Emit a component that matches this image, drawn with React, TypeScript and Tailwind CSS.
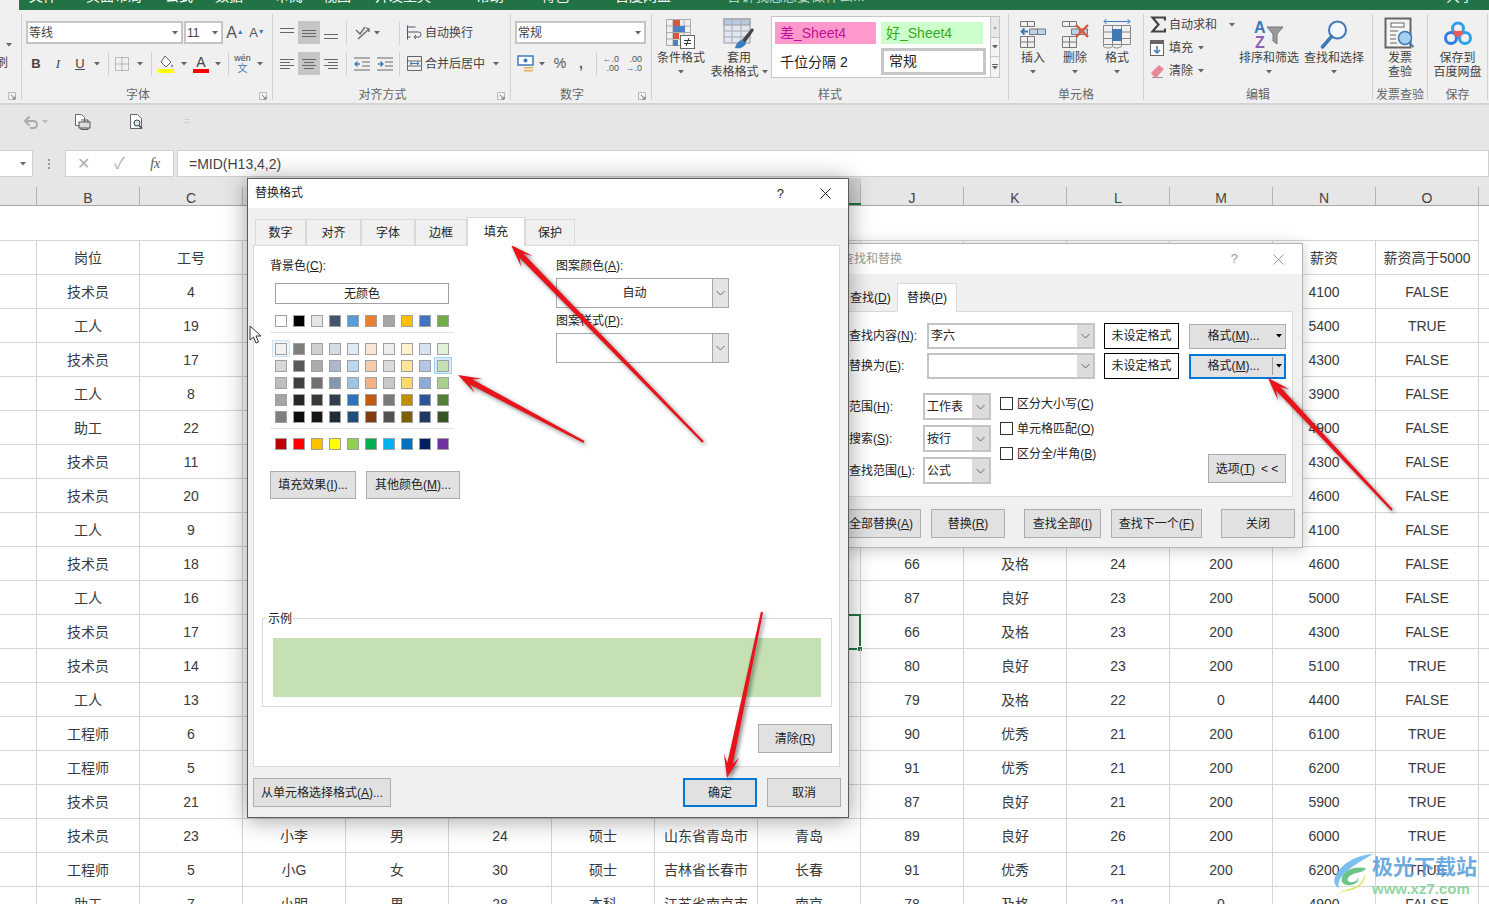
import type { ReactNode } from 'react';

const tabs = [
  ['文件', 'w-[57px]'],
  ['页面布局', 'w-[79px]'],
  ['公式', 'w-[50px]'],
  ['数据', 'w-[60px]'],
  ['审阅', 'w-[48px]'],
  ['视图', 'w-[52px]'],
  ['开发工具', 'w-[101px]'],
  ['帮助', 'w-[65px]'],
  ['特色', 'w-[74px]'],
  ['百度网盘', 'w-[84px]'],
];

const themeRow = ['#ffffff', '#000000', '#e7e6e6', '#44546a', '#5b9bd5', '#ed7d31', '#a5a5a5', '#ffc000', '#4472c4', '#70ad47'];
const shades = [
  ['#f2f2f2', '#7f7f7f', '#d0cece', '#d6dce4', '#deeaf6', '#fbe5d5', '#ededed', '#fff2cc', '#d9e2f3', '#e2efd9'],
  ['#d8d8d8', '#595959', '#aeabab', '#adb9ca', '#bdd7ee', '#f7cbac', '#dbdbdb', '#fee599', '#b4c6e7', '#c5e0b3'],
  ['#bfbfbf', '#3f3f3f', '#757070', '#8496b0', '#9dc3e6', '#f4b183', '#c9c9c9', '#ffd966', '#8eaadb', '#a8d08d'],
  ['#a5a5a5', '#262626', '#3a3838', '#323e4f', '#2e75b5', '#c55a11', '#7b7b7b', '#bf9000', '#2f5496', '#538135'],
  ['#7f7f7f', '#0c0c0c', '#171616', '#222a35', '#1e4e79', '#833c0b', '#525252', '#7f6000', '#1f3864', '#375623'],
];
const standard = ['#c00000', '#ff0000', '#ffc000', '#ffff00', '#92d050', '#00b050', '#00b0f0', '#0070c0', '#002060', '#7030a0'];

const columns = ['B', 'C', 'D', 'E', 'F', 'G', 'H', 'I', 'J', 'K', 'L', 'M', 'N', 'O'];

// B C D E F G H I J K L M N O
const rows: string[][] = [
  ['岗位', '工号', '', '', '', '', '', '', '', '', '', '', '薪资', '薪资高于5000'],
  ['技术员', '4', '', '', '', '', '', '', '', '', '', '', '4100', 'FALSE'],
  ['工人', '19', '', '', '', '', '', '', '', '', '', '', '5400', 'TRUE'],
  ['技术员', '17', '', '', '', '', '', '', '', '', '', '', '4300', 'FALSE'],
  ['工人', '8', '', '', '', '', '', '', '', '', '', '', '3900', 'FALSE'],
  ['助工', '22', '', '', '', '', '', '', '', '', '', '', '4900', 'FALSE'],
  ['技术员', '11', '', '', '', '', '', '', '', '', '', '', '4300', 'FALSE'],
  ['技术员', '20', '', '', '', '', '', '', '', '', '', '', '4600', 'FALSE'],
  ['工人', '9', '', '', '', '', '', '', '', '', '', '', '4100', 'FALSE'],
  ['技术员', '18', '', '', '', '', '', '', '66', '及格', '24', '200', '4600', 'FALSE'],
  ['工人', '16', '', '', '', '', '', '', '87', '良好', '23', '200', '5000', 'FALSE'],
  ['技术员', '17', '', '', '', '', '', '', '66', '及格', '23', '200', '4300', 'FALSE'],
  ['技术员', '14', '', '', '', '', '', '', '80', '良好', '23', '200', '5100', 'TRUE'],
  ['工人', '13', '', '', '', '', '', '', '79', '及格', '22', '0', '4400', 'FALSE'],
  ['工程师', '6', '', '', '', '', '', '', '90', '优秀', '21', '200', '6100', 'TRUE'],
  ['工程师', '5', '', '', '', '', '', '', '91', '优秀', '21', '200', '6200', 'TRUE'],
  ['技术员', '21', '', '', '', '', '', '', '87', '良好', '21', '200', '5900', 'TRUE'],
  ['技术员', '23', '小李', '男', '24', '硕士', '山东省青岛市', '青岛', '89', '良好', '26', '200', '6000', 'TRUE'],
  ['工程师', '5', '小G', '女', '30', '硕士', '吉林省长春市', '长春', '91', '优秀', '21', '200', '6200', 'TRUE'],
  ['助工', '7', '小明', '男', '28', '本科', '江苏省南京市', '南京', '78', '及格', '21', '0', '4900', 'FALSE'],
];

function Caret({ color = '#666' }: { color?: string }) {
  return (
    <svg width="6" height="4" viewBox="0 0 6 4" className="shrink-0">
      <path d="M0 0h6L3 3.5z" fill={color} />
    </svg>
  );
}

function Sep({ h = 'h-[24px]' }: { h?: string }) {
  return <div className={`w-px shrink-0 bg-[#d2d2d2] ${h}`} />;
}

function Bars({ bars, size = 14 }: { bars: number[][]; size?: number }) {
  return (
    <svg width={size} height={size} viewBox={`0 0 ${size} ${size}`} className="shrink-0">
      {bars.map(([x, y, w], i) => (
        <rect key={i} x={x} y={y} width={w} height="1" fill="#666" />
      ))}
    </svg>
  );
}

function AlignBtn({ bars, on }: { bars: number[][]; on?: boolean }) {
  return (
    <div className={`flex h-[23px] w-[22px] items-center justify-center ${on ? 'bg-[#c6c6c6]' : ''}`}>
      <Bars bars={bars} />
    </div>
  );
}

function Launcher() {
  return (
    <div className="flex w-[18px] items-center justify-center pt-[6px]">
      <svg width="8" height="8" viewBox="0 0 8 8">
        <path d="M0.5 0.5h7v7h-7z" fill="none" stroke="#bbb" />
        <path d="M3 3l4 4M7 4.5V7H4.5" fill="none" stroke="#777" />
      </svg>
    </div>
  );
}

function GroupLabel({ text, launcher }: { text: string; launcher?: boolean }) {
  return (
    <div className="mt-auto flex h-[15px] text-[12px] leading-[20px] text-[#666]">
      <div className="flex-1 text-center whitespace-nowrap">{text}</div>
      {launcher && <Launcher />}
    </div>
  );
}

function BigBtn({ icon, label, second, w, caret = true }: { icon: ReactNode; label: string; second?: string; w: string; caret?: boolean }) {
  return (
    <div className={`flex shrink-0 flex-col items-center text-[12px] leading-[14px] text-[#444] ${w}`}>
      <div className="flex h-[34px] items-center justify-center">{icon}</div>
      <div className="whitespace-nowrap">{label}</div>
      {second ? (
        <div className="flex items-center gap-[3px] whitespace-nowrap">
          {second}
          {caret && <Caret />}
        </div>
      ) : (
        caret && (
          <div className="flex h-[14px] items-center">
            <Caret />
          </div>
        )
      )}
    </div>
  );
}

function Select({ text, w }: { text: string; w: string }) {
  return (
    <div className={`flex h-[23px] shrink-0 items-center justify-between border-2 border-[#c6c6c6] bg-white pl-[1px] pr-[3px] text-[12px] text-[#444] ${w}`}>
      {text}
      <Caret />
    </div>
  );
}

function CondIcon() {
  return (
    <svg width="30" height="30" viewBox="0 0 30 30">
      <path d="M.5.5h24v26H.5zM.5 7h24M.5 13.5h24M.5 20h24M7 .5v26M18 .5v26" fill="none" stroke="#aaa" />
      <rect x="7" y="1" width="7" height="6" fill="#d9573a" />
      <rect x="7" y="7" width="12" height="6" fill="#4a83c0" />
      <rect x="7" y="14" width="6" height="6" fill="#d9573a" />
      <rect x="7" y="21" width="5" height="6" fill="#4a83c0" />
      <rect x="14.5" y="16.5" width="14" height="13" fill="#fff" stroke="#666" />
      <path d="M18 21.5h7M18 24.5h7M23 19l-3 8" stroke="#333" fill="none" />
    </svg>
  );
}

function TableIcon() {
  return (
    <svg width="32" height="32" viewBox="0 0 32 32">
      <rect x="1" y="1" width="26" height="24" fill="#dfe7f2" stroke="#999" />
      <rect x="1" y="1" width="26" height="6" fill="#b7c9e2" stroke="#999" />
      <path d="M1 13h26M1 19h26M9 1v24M18 1v24" stroke="#aaa" fill="none" />
      <path d="M29 10L19 22l3 3 9-13z" fill="#444" />
      <path d="M19 22c-4 1-6 4-7 8 5 1 10-1 11-5z" fill="#3b7dbd" />
    </svg>
  );
}

function CellsIcon({ remove }: { remove?: boolean }) {
  return (
    <svg width="28" height="30" viewBox="0 0 28 30">
      <path d="M1.5 2.500h14v5h-14zM8.500 2.500v5M1.500 17.500h14v11h-14zM1.500 23h14M8.500 17.500v11" fill="none" stroke="#777" />
      <path d="M10.500 10h16v5.500h-16zM18.500 10v5.500" fill="#bcd2e8" stroke="#777" />
      {remove ? (
        <path d="M15 6l12 12M27 6L15 18" stroke="#d9573a" strokeWidth="2.400" fill="none" />
      ) : (
        <path d="M9 12.500H3M5.500 9.500l-3 3 3 3" stroke="#3f79b5" strokeWidth="1.800" fill="none" />
      )}
    </svg>
  );
}

function FormatCellsIcon() {
  return (
    <svg width="30" height="32" viewBox="0 0 30 32">
      <path d="M2 3.500h26M4.500 1l-2.500 2.500 2.500 2.500M25.500 1l2.500 2.500-2.500 2.500" fill="none" stroke="#3f79b5" />
      <path d="M1.500 7.500h27v19h-27zM1.500 14h27M1.500 20.500h27M10.500 7.500v19M19.500 7.500v19" fill="none" stroke="#888" />
      <rect x="10" y="11" width="10" height="12" fill="#3f79b5" />
      <path d="M1.500 26.500v2c3 2 6 2 9 0v-2M10.500 28.500c3 2 6 2 9 0v-2" fill="none" stroke="#888" />
    </svg>
  );
}

function SortIcon() {
  return (
    <svg width="30" height="30" viewBox="0 0 30 30">
      <text x="0" y="14" fontSize="16" fontWeight="700" fill="#3f79b5">A</text>
      <text x="1" y="29" fontSize="16" fontWeight="700" fill="#8e5fb5">Z</text>
      <path d="M13 8h16l-6 7v10l-4-3v-7z" fill="#999" stroke="#777" />
    </svg>
  );
}

function SearchIcon() {
  return (
    <svg width="30" height="30" viewBox="0 0 30 30">
      <circle cx="18.500" cy="11" r="8.500" fill="#f4f8fc" stroke="#3f79b5" strokeWidth="2" />
      <path d="M12.500 17.500L3.500 28" stroke="#3f79b5" strokeWidth="3.500" strokeLinecap="round" />
    </svg>
  );
}

function InvoiceIcon() {
  return (
    <svg width="32" height="34" viewBox="0 0 32 34">
      <rect x="1.500" y="1.500" width="25" height="29" fill="#f4f4f4" stroke="#666" strokeWidth="2" />
      <rect x="7" y="6" width="13" height="4" fill="#fff" stroke="#666" />
      <path d="M6 14h8M6 18h6M6 22h6M6 26h7" stroke="#666" />
      <circle cx="21" cy="21" r="6.500" fill="#a6d0ef" stroke="#3f79b5" strokeWidth="1.500" />
      <path d="M25.500 26l4 4" stroke="#3f79b5" strokeWidth="2" />
    </svg>
  );
}

function BaiduIcon() {
  return (
    <svg width="30" height="26" viewBox="0 0 30 26">
      <circle cx="15" cy="7.500" r="5.500" fill="none" stroke="#2f9fe8" strokeWidth="3" />
      <circle cx="8" cy="17" r="5.500" fill="none" stroke="#2f7fe0" strokeWidth="3" />
      <circle cx="22" cy="17" r="5.500" fill="none" stroke="#2f9fe8" strokeWidth="3" />
      <path d="M11 10c3 6 5 6 8 0" fill="#ee5a5a" stroke="#ee5a5a" strokeWidth="3" />
    </svg>
  );
}

function FontGroup() {
  return (
    <div className="flex h-[86px] w-[251px] shrink-0 flex-col border-r border-[#d2d2d2] pt-[7px]">
      <div className="flex items-center pl-[4px]">
        <Select text="等线" w="w-[157px]" />
        <Select text="11" w="ml-px w-[39px]" />
        <div className="ml-[1px] flex w-[22px] justify-center text-[16px] leading-[20px] text-[#555]">
          A<span className="-mt-[1px] text-[7px] text-[#3f79b5]">▲</span>
        </div>
        <div className="flex w-[22px] justify-center text-[13px] leading-[20px] text-[#555]">
          A<span className="-mt-[1px] text-[7px] text-[#3f79b5]">▼</span>
        </div>
      </div>
      <div className="mt-[8px] flex h-[23px] items-center pl-[3px] text-[13px] text-[#444]">
        <div className="w-[22px] text-center font-bold">B</div>
        <div className="w-[22px] text-center font-['Liberation_Serif',serif] italic">I</div>
        <div className="w-[22px] text-center underline">U</div>
        <div className="flex w-[12px] justify-center">
          <Caret />
        </div>
        <div className="ml-[5px]">
          <Sep />
        </div>
        <div className="flex w-[26px] justify-center">
          <svg width="14" height="14" viewBox="0 0 14 14">
            <path d="M.5.5h13v13H.5zM.5 7h13M7 .5v13" fill="none" stroke="#888" strokeDasharray="1 1" />
          </svg>
        </div>
        <div className="flex w-[10px] justify-center">
          <Caret />
        </div>
        <div className="ml-[6px]">
          <Sep />
        </div>
        <div className="flex w-[28px] justify-center">
          <svg width="16" height="18" viewBox="0 0 16 18">
            <path d="M7 1l6 6-5 5-5-5z" fill="#fff" stroke="#666" />
            <path d="M14 9c1 2 1 3 0 3.500-1-.5-1-1.500 0-3.500z" fill="#666" />
            <rect x="0" y="14" width="16" height="4" fill="#ffff00" />
          </svg>
        </div>
        <div className="flex w-[8px] justify-center">
          <Caret />
        </div>
        <div className="flex h-[18px] w-[26px] flex-col items-center">
          <span className="text-[14px] leading-[14px]">A</span>
          <span className="h-[4px] w-[16px] bg-[#ff0000]" />
        </div>
        <div className="flex w-[8px] justify-center">
          <Caret />
        </div>
        <div className="ml-[6px]">
          <Sep />
        </div>
        <div className="flex w-[27px] flex-col items-center">
          <span className="text-[9px] leading-[9px]">wén</span>
          <span className="text-[10px] leading-[11px] text-[#3f79b5]">文</span>
        </div>
        <div className="flex w-[8px] justify-center">
          <Caret />
        </div>
      </div>
      <GroupLabel text="字体" launcher />
    </div>
  );
}

function AlignGroup() {
  return (
    <div className="flex h-[86px] w-[238px] shrink-0 flex-col border-r border-[#d2d2d2] pt-[7px]">
      <div className="flex h-[23px] items-center pl-[3px] text-[12px] text-[#444]">
        <AlignBtn bars={[[0, 2, 14], [0, 6, 14]]} />
        <AlignBtn on bars={[[0, 4, 14], [0, 7, 14], [0, 10, 14]]} />
        <AlignBtn bars={[[0, 8, 14], [0, 12, 14]]} />
        <div className="ml-[4px]">
          <Sep />
        </div>
        <div className="flex w-[52px] items-center gap-[4px] pl-[8px]">
          <svg width="15" height="15" viewBox="0 0 15 15">
            <path d="M1 5l4 4 5-7M3 14L14 4M11 3l3 1v3" fill="none" stroke="#666" strokeWidth="1.300" />
          </svg>
          <Caret />
        </div>
        <Sep />
        <div className="ml-[7px] flex items-center gap-[3px] whitespace-nowrap">
          <svg width="15" height="15" viewBox="0 0 15 15">
            <path d="M.5.5v14M.5 2h8M.5 7h11a2.500 2.500 0 010 5H7M9 10l-2 2 2 2M.5 12h3" fill="none" stroke="#556" />
          </svg>
          自动换行
        </div>
      </div>
      <div className="mt-[8px] flex h-[23px] items-center pl-[3px] text-[12px] text-[#444]">
        <AlignBtn bars={[[0, 2, 14], [0, 5, 10], [0, 8, 14], [0, 11, 10]]} />
        <AlignBtn on bars={[[0, 2, 14], [2, 5, 10], [0, 8, 14], [2, 11, 10]]} />
        <AlignBtn bars={[[0, 2, 14], [4, 5, 10], [0, 8, 14], [4, 11, 10]]} />
        <div className="ml-[4px]">
          <Sep />
        </div>
        <div className="flex w-[52px] items-center justify-center gap-[7px]">
          <svg width="16" height="14" viewBox="0 0 16 14">
            <path d="M0 1h16M8 5h8M8 9h8M0 13h16" stroke="#666" />
            <path d="M6 7H1M3.500 4.500L1 7l2.500 2.500" stroke="#3f79b5" fill="none" strokeWidth="1.300" />
          </svg>
          <svg width="16" height="14" viewBox="0 0 16 14">
            <path d="M0 1h16M8 5h8M8 9h8M0 13h16" stroke="#666" />
            <path d="M1 7h5M3.500 4.500L6 7 3.500 9.500" stroke="#3f79b5" fill="none" strokeWidth="1.300" />
          </svg>
        </div>
        <Sep />
        <div className="ml-[7px] flex items-center gap-[3px] whitespace-nowrap">
          <svg width="15" height="15" viewBox="0 0 15 15">
            <path d="M.5.5h14v14H.5zM.5 5h14M.5 10h14" fill="none" stroke="#666" />
            <path d="M3 7.500h9M5 6l-2 1.500L5 9M10 6l2 1.500L10 9" fill="none" stroke="#3f79b5" />
          </svg>
          合并后居中
          <span className="ml-[5px]">
            <Caret />
          </span>
        </div>
      </div>
      <GroupLabel text="对齐方式" launcher />
    </div>
  );
}

function NumberGroup() {
  return (
    <div className="flex h-[86px] w-[141px] shrink-0 flex-col border-r border-[#d2d2d2] pt-[7px]">
      <div className="pl-[4px]">
        <Select text="常规" w="w-[131px]" />
      </div>
      <div className="mt-[8px] flex h-[23px] items-center pl-[6px] text-[#555]">
        <svg width="18" height="18" viewBox="0 0 18 18" className="shrink-0">
          <rect x="1" y="1" width="15" height="9" fill="#fff" stroke="#3f79b5" strokeWidth="1.500" />
          <circle cx="8.500" cy="5.500" r="2" fill="#3f79b5" />
          <path d="M7 12h9v1.500H7zM7 15h9v1.500H7z" fill="#e8b04a" />
        </svg>
        <div className="flex w-[14px] justify-center">
          <Caret />
        </div>
        <div className="w-[22px] text-center text-[14px]">%</div>
        <div className="w-[20px] text-center text-[14px] font-bold">,</div>
        <div className="ml-[5px]">
          <Sep />
        </div>
        <div className="ml-[2px] flex w-[20px] flex-col items-end text-[9px] leading-[9px]">
          <span><span className="text-[#3f79b5]">←</span>.0</span>
          <span>.00</span>
        </div>
        <div className="ml-[3px] flex w-[20px] flex-col items-end text-[9px] leading-[9px]">
          <span>.00</span>
          <span><span className="text-[#3f79b5]">→</span>.0</span>
        </div>
      </div>
      <GroupLabel text="数字" launcher />
    </div>
  );
}

function StylesGroup() {
  return (
    <div className="flex h-[86px] w-[357px] shrink-0 flex-col border-r border-[#d2d2d2] pt-[3px]">
      <div className="flex">
        <BigBtn w="w-[58px]" label="条件格式" icon={<CondIcon />} />
        <BigBtn w="w-[58px]" label="套用" second="表格格式" icon={<TableIcon />} />
        <div className="ml-[3px] mt-[-1px] flex h-[62px] w-[229px] border border-[#c6c6c6] bg-white text-[14px]">
          <div className="grid flex-1 grid-cols-[106px_106px] grid-rows-[26px_28px] px-[3px] pt-[5px]">
            <div className="mr-[5px] flex h-[22px] items-center bg-[#ff99cc] pl-[5px] text-[#c0109c]">差_Sheet4</div>
            <div className="flex h-[22px] w-[102px] items-center bg-[#ccffcc] pl-[5px] text-[#3aa81e]">好_Sheet4</div>
            <div className="flex items-center pl-[5px] text-[#222]">千位分隔 2</div>
            <div className="flex h-[27px] w-[105px] items-center border-[3px] border-[#c6c6c6] pl-[5px] text-[#222]">常规</div>
          </div>
          <div className="flex w-[14px] flex-col border-l border-[#c6c6c6] bg-[#f4f4f4]">
            <div className="flex h-[21px] items-center justify-center border-b border-[#c6c6c6] bg-[#e8e8e8] text-[6px] text-[#aaa]">▲</div>
            <div className="flex h-[19px] items-center justify-center border-b border-[#c6c6c6]">
              <Caret />
            </div>
            <div className="flex flex-1 flex-col items-center justify-center gap-[1px]">
              <span className="h-px w-[6px] bg-[#666]" />
              <Caret />
            </div>
          </div>
        </div>
      </div>
      <GroupLabel text="样式" />
    </div>
  );
}

function CellsGroup() {
  return (
    <div className="flex h-[86px] w-[135px] shrink-0 flex-col border-r border-[#d2d2d2] pt-[3px]">
      <div className="flex pl-[3px]">
        <BigBtn w="w-[42px]" label="插入" icon={<CellsIcon />} />
        <BigBtn w="w-[42px]" label="删除" icon={<CellsIcon remove />} />
        <BigBtn w="w-[42px]" label="格式" icon={<FormatCellsIcon />} />
      </div>
      <GroupLabel text="单元格" />
    </div>
  );
}

function EditGroup() {
  return (
    <div className="flex h-[86px] w-[229px] shrink-0 flex-col border-r border-[#d2d2d2]">
      <div className="flex">
        <div className="-mt-[1px] flex w-[95px] shrink-0 flex-col pl-[6px] text-[12px] text-[#444]">
          <div className="flex h-[23px] items-center gap-[3px]">
            <svg width="16" height="17" viewBox="0 0 16 17">
              <path d="M15 4.500V1.500H2.500L8.500 8.500 2.500 15.500H15V12.500" fill="none" stroke="#444" strokeWidth="2.200" />
            </svg>
            自动求和
            <span className="ml-[9px]">
              <Caret />
            </span>
          </div>
          <div className="flex h-[23px] items-center gap-[5px]">
            <svg width="14" height="16" viewBox="0 0 14 16">
              <rect x=".5" y=".5" width="13" height="15" fill="#fff" stroke="#666" />
              <rect width="14" height="4" fill="#666" />
              <path d="M7 6v7M4 10l3 3 3-3" fill="none" stroke="#3f79b5" strokeWidth="1.500" />
            </svg>
            填充
            <Caret />
          </div>
          <div className="flex h-[23px] items-center gap-[5px]">
            <svg width="14" height="14" viewBox="0 0 14 14">
              <path d="M9 1l5 4-7 8H4L1 9z" fill="#e88a9a" />
              <path d="M2 13.500h11" stroke="#999" />
            </svg>
            清除
            <Caret />
          </div>
        </div>
        <div className="pt-[3px]">
          <BigBtn w="w-[60px]" label="排序和筛选" icon={<SortIcon />} />
        </div>
        <div className="ml-[5px] pt-[3px]">
          <BigBtn w="w-[60px]" label="查找和选择" icon={<SearchIcon />} />
        </div>
      </div>
      <GroupLabel text="编辑" />
    </div>
  );
}

function Ribbon() {
  return (
    <div className="flex h-[95px] shrink-0 border-b-2 border-[#d4d4d4] bg-[#f0f0f0] pt-[4px]">
      <div className="flex h-[86px] w-[22px] shrink-0 flex-col border-r border-[#d2d2d2] pt-[29px] text-[12px] leading-[14px] text-[#444]">
        <div className="flex justify-end pr-[9px]">
          <Caret />
        </div>
        <div className="-ml-[4px] mt-[9px]">刷</div>
        <div className="mt-auto flex justify-end">
          <Launcher />
        </div>
      </div>
      <FontGroup />
      <AlignGroup />
      <NumberGroup />
      <StylesGroup />
      <CellsGroup />
      <EditGroup />
      <div className="flex h-[86px] w-[55px] shrink-0 flex-col border-r border-[#d2d2d2] pt-[3px]">
        <BigBtn w="w-[54px]" label="发票" second="查验" caret={false} icon={<InvoiceIcon />} />
        <GroupLabel text="发票查验" />
      </div>
      <div className="flex h-[86px] w-[60px] shrink-0 flex-col border-r border-[#d2d2d2] pt-[3px]">
        <BigBtn w="w-[59px]" label="保存到" second="百度网盘" caret={false} icon={<BaiduIcon />} />
        <GroupLabel text="保存" />
      </div>
    </div>
  );
}

function TitleStrip() {
  return (
    <div className="flex h-[10px] shrink-0 overflow-hidden">
      <div className="w-[19px] shrink-0 bg-[#f0f0f0]" />
      <div className="flex flex-1 bg-[#217346] pl-[10px] text-[14px] leading-[14px] text-white">
        {tabs.map(([name, w]) => (
          <div key={name} className={`-mt-[11px] shrink-0 whitespace-nowrap ${w}`}>
            {name}
          </div>
        ))}
        <div className="-mt-[11px] ml-[28px] whitespace-nowrap text-[#b5d3c2]">告诉我您想要做什么...</div>
        <div className="-mt-[11px] ml-auto mr-[15px]">共享</div>
      </div>
    </div>
  );
}

function QuickBar() {
  return (
    <div className="flex h-[45px] shrink-0 items-center bg-[#e6e6e6] pb-[12px] pl-[23px]">
      <svg width="15" height="15" viewBox="0 0 15 15">
        <path d="M4 7h6.500a3.500 3.500 0 010 7H7M6.500 2.500L2 7l4.500 4.500" fill="none" stroke="#aaa" strokeWidth="2" />
      </svg>
      <div className="ml-[4px] mr-[26px]">
        <Caret color="#bbb" />
      </div>
      <svg width="17" height="16" viewBox="0 0 17 16">
        <path d="M1.500.5h6l3 3v8h-9z" fill="#fff" stroke="#666" />
        <rect x="5" y="8" width="11" height="6" fill="#ddd" stroke="#555" />
        <path d="M7 6h7v2M7 14v1.500h7V14" fill="none" stroke="#555" />
      </svg>
      <svg width="15" height="16" viewBox="0 0 15 16" className="ml-[38px]">
        <path d="M1.500.5h7l4 4v10h-11z" fill="#fff" stroke="#666" />
        <circle cx="8" cy="9" r="3" fill="#d6e6f4" stroke="#444" />
        <path d="M10 11.500l3 3" stroke="#444" strokeWidth="1.500" />
      </svg>
      <div className="ml-[40px] text-[10px] text-[#ccc]">=</div>
    </div>
  );
}

function FormulaBar() {
  return (
    <div className="flex h-[28px] shrink-0 bg-[#e6e6e6] pb-px">
      <div className="flex w-[33px] items-center justify-end border-y border-r border-[#d0d0d0] bg-white pr-[6px]">
        <Caret />
      </div>
      <div className="flex w-[32px] flex-col items-center justify-center gap-[2px]">
        <span className="h-[2px] w-[2px] bg-[#999]" />
        <span className="h-[2px] w-[2px] bg-[#999]" />
        <span className="h-[2px] w-[2px] bg-[#999]" />
      </div>
      <div className="flex w-[109px] items-center border border-[#d0d0d0] bg-white text-[#b0b0b0]">
        <div className="w-[36px] text-center text-[16px]">✕</div>
        <div className="w-[36px] text-center text-[16px]">✓</div>
        <div className="w-[36px] text-center font-['Liberation_Serif',serif] text-[14px] italic text-[#555]">fx</div>
      </div>
      <div className="ml-[3px] flex flex-1 items-center border border-[#d0d0d0] bg-white pl-[11px] pt-px text-[14px] text-[#444]">=MID(H13,4,2)</div>
    </div>
  );
}

function Sheet() {
  return (
    <div className="flex-1 overflow-hidden bg-white text-[14px] text-[#3a3a3a]">
      <div className="grid h-[28px] grid-cols-[37px_repeat(14,103px)_1fr] border-b border-[#a8a8a8] bg-[#e6e6e6] text-[#444]">
        <div className="flex items-end">
          <div className="h-[18px] flex-1 border-r border-[#b4b4b4]" />
        </div>
        {columns.map((c) => (
          <div key={c} className={`flex items-end ${c === 'I' ? 'border-b-2 border-[#217346] bg-[#d2d2d2]' : ''}`}>
            <div className="h-[18px] flex-1 border-r border-[#b4b4b4] text-center leading-[22px]">{c}</div>
          </div>
        ))}
        <div />
      </div>
      <div className="h-[35px] w-[1479px] border-r border-b border-[#d4d4d4]" />
      {rows.map((row, r) => (
        <div key={r} className="grid h-[34px] grid-cols-[37px_repeat(14,103px)_1fr] border-b border-[#d4d4d4]">
          <div className="border-r border-[#d4d4d4]" />
          {row.map((cell, c) => (
            <div key={c} className="relative flex items-center justify-center whitespace-nowrap border-r border-[#d4d4d4] pt-[2px]">
              {cell}
              {r === 11 && c === 7 && (
                <div className="absolute -inset-px -bottom-[2px] border-2 border-[#217346]">
                  <span className="absolute -bottom-[4px] -right-[4px] h-[6px] w-[6px] border border-white bg-[#217346]" />
                </div>
              )}
            </div>
          ))}
          <div />
        </div>
      ))}
    </div>
  );
}

function Hot({ text, k, rest }: { text: string; k: string; rest?: string }) {
  return (
    <>
      {text}(<u>{k}</u>){rest}
    </>
  );
}

function DlgBtn({ children, w, h = 'h-[29px]', focus }: { children: ReactNode; w: string; h?: string; focus?: boolean }) {
  return (
    <div className={`flex shrink-0 items-center justify-center whitespace-nowrap bg-[#e1e1e1] text-[12px] text-[#222] ${focus ? 'border-2 border-[#0078d7]' : 'border border-[#adadad]'} ${w} ${h}`}>
      {children}
    </div>
  );
}

function Swatch({ color, sel }: { color: string; sel?: 'strong' | 'soft' }) {
  const ring = sel === 'strong' ? 'border border-[#9fd0f5] bg-[#d8ecfb]' : sel === 'soft' ? 'border border-[#cfe6f8] bg-[#eef6fc]' : '';
  return (
    <div className={`flex h-[17px] w-[18px] items-center justify-center ${ring}`}>
      <span className="h-[12px] w-[12px] border border-[#a0a0a0]" style={{ backgroundColor: color }} />
    </div>
  );
}

function DropBox({ w }: { w: string }) {
  return (
    <div className={`flex h-[30px] items-stretch justify-end border border-[#a8a8a8] bg-white ${w}`}>
      <div className="flex w-[16px] items-center justify-center border-l border-[#a8a8a8] bg-[#e4e4e4]">
        <Chevron />
      </div>
    </div>
  );
}

function Chevron() {
  return (
    <svg width="9" height="6" viewBox="0 0 9 6">
      <path d="M.5 1l4 4 4-4" fill="none" stroke="#666" />
    </svg>
  );
}

function CloseX({ color }: { color: string }) {
  return (
    <svg width="11" height="11" viewBox="0 0 11 11">
      <path d="M.5.5l10 10M10.500.5l-10 10" stroke={color} />
    </svg>
  );
}

function FormatDialog() {
  const labels = [
    ['数字', 'w-[51px]'],
    ['对齐', 'w-[55px]'],
    ['字体', 'w-[54px]'],
    ['边框', 'w-[52px]'],
  ];
  return (
    <div className="absolute left-[247px] top-[178px] flex h-[640px] w-[602px] flex-col border border-[#5c5c5c] bg-[#f0f0f0] text-[12px] text-[#222] shadow-[0_2px_22px_rgba(0,0,0,0.38)]">
      <div className="flex h-[29px] shrink-0 items-center bg-white pl-[7px]">
        <span className="-mt-px">替换格式</span>
        <span className="ml-auto mr-[36px] text-[13px]">?</span>
        <span className="mr-[17px]">
          <CloseX color="#222" />
        </span>
      </div>
      <div className="flex h-[37px] shrink-0 items-end pl-[7px]">
        {labels.map(([t, w]) => (
          <div key={t} className={`flex h-[26px] items-center justify-center border border-b-0 border-[#d9d9d9] ${w}`}>
            {t}
          </div>
        ))}
        <div className="relative top-px z-10 flex h-[29px] w-[58px] items-center justify-center border border-b-0 border-[#d9d9d9] bg-white">填充</div>
        <div className="flex h-[26px] w-[50px] items-center justify-center border border-b-0 border-[#d9d9d9]">保护</div>
      </div>
      <div className="ml-[5px] flex h-[522px] w-[587px] shrink-0 flex-col border border-[#d9d9d9] bg-white">
        <div className="flex h-[372px] shrink-0">
          <div className="w-[302px] shrink-0 pl-[16px] pt-[12px]">
            <div className="leading-[16px]">
              <Hot text="背景色" k="C" rest=":" />
            </div>
            <div className="ml-[5px] mt-[9px] flex h-[21px] w-[174px] items-center justify-center border border-[#a0a0a0]">无颜色</div>
            <div className="ml-[2px] mt-[8px] flex">
              {themeRow.map((c) => (
                <Swatch key={c} color={c} />
              ))}
            </div>
            <div className="mt-[3px] h-px w-[184px] bg-[#e2e2e2]" />
            <div className="ml-[2px] mt-[7px]">
              {shades.map((row, r) => (
                <div key={r} className="flex">
                  {row.map((c, i) => (
                    <Swatch key={i} color={c} sel={r === 1 && i === 9 ? 'strong' : r === 0 && i === 0 ? 'soft' : undefined} />
                  ))}
                </div>
              ))}
            </div>
            <div className="mt-[3px] h-px w-[184px] bg-[#e2e2e2]" />
            <div className="ml-[2px] mt-[6px] flex">
              {standard.map((c) => (
                <Swatch key={c} color={c} />
              ))}
            </div>
            <div className="mt-[19px] flex gap-[10px]">
              <DlgBtn w="w-[86px]" h="h-[28px]">
                <Hot text="填充效果" k="I" rest="..." />
              </DlgBtn>
              <DlgBtn w="w-[94px]" h="h-[28px]">
                <Hot text="其他颜色" k="M" rest="..." />
              </DlgBtn>
            </div>
          </div>
          <div className="pt-[12px]">
            <div className="leading-[16px]">
              <Hot text="图案颜色" k="A" rest=":" />
            </div>
            <div className="mt-[4px] flex h-[30px] w-[173px] items-stretch border border-[#a8a8a8]">
              <div className="flex flex-1 items-center justify-center">自动</div>
              <div className="flex w-[16px] items-center justify-center border-l border-[#a8a8a8] bg-[#e4e4e4]">
                <Chevron />
              </div>
            </div>
            <div className="mt-[5px] leading-[16px]">
              <Hot text="图案样式" k="P" rest=":" />
            </div>
            <div className="mt-[4px]">
              <DropBox w="w-[173px]" />
            </div>
          </div>
        </div>
        <div className="relative ml-[8px] h-[89px] w-[570px] shrink-0 border border-[#d9d9d9] px-[10px] pt-[19px]">
          <span className="absolute -top-[8px] left-[4px] bg-white px-px leading-[16px]">示例</span>
          <div className="h-[59px] bg-[#c5e0b3]" />
        </div>
        <div className="mr-[7px] mt-[17px] self-end">
          <DlgBtn w="w-[74px]">
            <Hot text="清除" k="R" />
          </DlgBtn>
        </div>
      </div>
      <div className="mt-[11px] flex pl-[5px] pr-[7px]">
        <DlgBtn w="w-[138px]">
          <Hot text="从单元格选择格式" k="A" rest="..." />
        </DlgBtn>
        <DlgBtn w="ml-auto w-[74px]" focus>
          确定
        </DlgBtn>
        <DlgBtn w="ml-[10px] w-[74px]">取消</DlgBtn>
      </div>
    </div>
  );
}

function Combo({ text, w, h, btn }: { text?: string; w: string; h: string; btn: string }) {
  return (
    <div className={`flex shrink-0 items-stretch border-2 border-[#c4c4c4] bg-white ${w} ${h}`}>
      <div className="flex flex-1 items-center pl-[2px] text-[12px]">{text}</div>
      <div className={`flex items-center justify-center bg-[#dcdcdc] ${btn}`}>
        <Chevron />
      </div>
    </div>
  );
}

function FormatSplit({ focused }: { focused?: boolean }) {
  return (
    <div className={`flex h-[25px] w-[97px] shrink-0 items-center bg-[#e1e1e1] ${focused ? 'border-2 border-[#0078d7]' : 'border border-[#adadad]'}`}>
      <div className="flex flex-1 justify-center pl-[4px]">
        <Hot text="格式" k="M" rest="..." />
      </div>
      <div className={`flex h-[18px] w-[12px] items-center justify-center ${focused ? 'border-l border-[#a0a0a0]' : ''}`}>
        <Caret color="#000" />
      </div>
    </div>
  );
}

function FindDialog() {
  const scopes = [
    ['范围', 'H', '工作表'],
    ['搜索', 'S', '按行'],
    ['查找范围', 'L', '公式'],
  ];
  const checks = [
    ['区分大小写', 'C'],
    ['单元格匹配', 'O'],
    ['区分全/半角', 'B'],
  ];
  return (
    <div className="absolute left-[838px] top-[243px] flex h-[305px] w-[465px] flex-col border border-[#b4b4b4] bg-[#f0f0f0] text-[12px] text-[#222] shadow-[0_2px_14px_rgba(0,0,0,0.22)]">
      <div className="flex h-[30px] shrink-0 items-center bg-white pl-[3px] text-[#999]">
        查找和替换
        <span className="ml-auto mr-[35px] text-[13px]">?</span>
        <span className="mr-[18px]">
          <CloseX color="#999" />
        </span>
      </div>
      <div className="flex h-[37px] shrink-0 items-end pl-[11px]">
        <div className="flex h-[26px] w-[47px] items-center whitespace-nowrap">
          <Hot text="查找" k="D" />
        </div>
        <div className="relative top-px z-10 flex h-[29px] w-[60px] items-center justify-center border border-b-0 border-[#d9d9d9] bg-white">
          <Hot text="替换" k="P" />
        </div>
      </div>
      <div className="ml-px flex h-[186px] w-[453px] shrink-0 flex-col border border-[#d9d9d9] bg-white pl-[8px] pt-[11px]">
        <div className="flex items-center">
          <div className="w-[78px] shrink-0 whitespace-nowrap">
            <Hot text="查找内容" k="N" rest=":" />
          </div>
          <Combo text="李六" w="w-[168px]" h="h-[26px]" btn="w-[16px]" />
          <div className="ml-[9px] flex h-[26px] w-[75px] shrink-0 items-center justify-center border border-black">未设定格式</div>
          <div className="ml-[10px]">
            <FormatSplit />
          </div>
        </div>
        <div className="mt-[4px] flex items-center">
          <div className="w-[78px] shrink-0 whitespace-nowrap">
            <Hot text="替换为" k="E" rest=":" />
          </div>
          <Combo w="w-[168px]" h="h-[26px]" btn="w-[16px]" />
          <div className="ml-[9px] flex h-[26px] w-[75px] shrink-0 items-center justify-center border border-black">未设定格式</div>
          <div className="ml-[10px]">
            <FormatSplit focused />
          </div>
        </div>
        <div className="mt-[14px] flex">
          <div className="flex w-[142px] shrink-0 flex-col gap-[5px]">
            {scopes.map(([t, k, v]) => (
              <div key={k} className="flex items-center">
                <div className="w-[74px] shrink-0 whitespace-nowrap">
                  <Hot text={t} k={k} rest=":" />
                </div>
                <Combo text={v} w="w-[68px]" h="h-[27px]" btn="w-[17px]" />
              </div>
            ))}
          </div>
          <div className="-mt-[2px] ml-[9px] flex flex-col">
            {checks.map(([t, k]) => (
              <div key={k} className="flex h-[25px] items-center gap-[4px] whitespace-nowrap">
                <span className="h-[13px] w-[13px] border border-[#333] bg-white" />
                <span>
                  <Hot text={t} k={k} />
                </span>
              </div>
            ))}
          </div>
          <div className="mb-px ml-auto mr-[6px] self-end">
            <DlgBtn w="w-[78px]">
              <span>
                <Hot text="选项" k="T" />
                <span className="ml-[6px]">&lt; &lt;</span>
              </span>
            </DlgBtn>
          </div>
        </div>
      </div>
      <div className="ml-[2px] mt-[12px] flex">
        <DlgBtn w="w-[80px]">
          <Hot text="全部替换" k="A" />
        </DlgBtn>
        <DlgBtn w="ml-[10px] w-[74px]">
          <Hot text="替换" k="R" />
        </DlgBtn>
        <DlgBtn w="ml-[19px] w-[77px]">
          <Hot text="查找全部" k="I" />
        </DlgBtn>
        <DlgBtn w="ml-[10px] w-[91px]">
          <Hot text="查找下一个" k="F" />
        </DlgBtn>
        <DlgBtn w="ml-[19px] w-[74px]">关闭</DlgBtn>
      </div>
    </div>
  );
}

function arrowPoints(tx: number, ty: number, px: number, py: number) {
  const len = Math.hypot(px - tx, py - ty);
  const ux = (px - tx) / len;
  const uy = (py - ty) / len;
  const nx = -uy;
  const ny = ux;
  const at = (back: number, side: number) => `${px - ux * back + nx * side},${py - uy * back + ny * side}`;
  return [at(len, 1.1), at(15, 2.8), at(23, 8), at(0, 0), at(23, -8), at(15, -2.8), at(len, -1.1)].join(' ');
}

function Arrows() {
  const list = [
    [703, 442, 511, 245],
    [584, 442, 458, 375],
    [1392, 510, 1268, 378],
    [762, 612, 727, 778],
  ];
  return (
    <svg width="1489" height="904" viewBox="0 0 1489 904" className="pointer-events-none absolute left-0 top-0 drop-shadow-[2px_2px_2px_rgba(0,0,0,0.5)]">
      {list.map(([tx, ty, px, py]) => (
        <polygon key={tx} points={arrowPoints(tx, ty, px, py)} fill="#e8131b" />
      ))}
    </svg>
  );
}

function Cursor() {
  return (
    <svg width="13" height="19" viewBox="0 0 13 19" className="absolute left-[248.500px] top-[325px]">
      <path d="M1 1v14l3.500-3 2.500 6 2.500-1-2.500-6H12z" fill="#fff" stroke="#333" />
    </svg>
  );
}

function Watermark() {
  return (
    <div className="pointer-events-none absolute left-[1333px] top-[853px] flex items-start">
      <svg width="40" height="43" viewBox="0 0 40 43" className="shrink-0 opacity-90">
        <path d="M40 1C24 2 8 10 2 24c-2 5 0 9 4 11-2-6 2-12 8-17C22 11 32 6 40 1z" fill="#6db9ee" />
        <path d="M33 15c-10-2-21 1-24 9-2 6 3 9 9 8 6-1 9-5 6-8 2 4-5 7-9 4-2-3 3-7 9-8 4-1 8-2 9-5z" fill="#5cbf7d" />
        <path d="M32 21c1 9-8 16-18 17-4 .5-8 2-11 5 6-8 21-6 26-15 1-2 2-4 3-7z" fill="#d6e45a" />
      </svg>
      <div className="-ml-px flex flex-col">
        <span className="mt-[2px] whitespace-nowrap text-[21px] font-bold leading-[24px] text-[#5a9fdc]/90">极光下载站</span>
        <span className="mt-[3px] whitespace-nowrap text-[15px] font-bold leading-[14px] text-[#86d096]/90">www.xz7.com</span>
      </div>
    </div>
  );
}

export default function App() {
  return (
    <div className="relative flex h-[904px] w-[1489px] flex-col overflow-hidden bg-white font-['Liberation_Sans','Noto_Sans_CJK_SC',sans-serif]">
      <TitleStrip />
      <Ribbon />
      <QuickBar />
      <FormulaBar />
      <Sheet />
      <Watermark />
      <FindDialog />
      <FormatDialog />
      <Arrows />
      <Cursor />
    </div>
  );
}
